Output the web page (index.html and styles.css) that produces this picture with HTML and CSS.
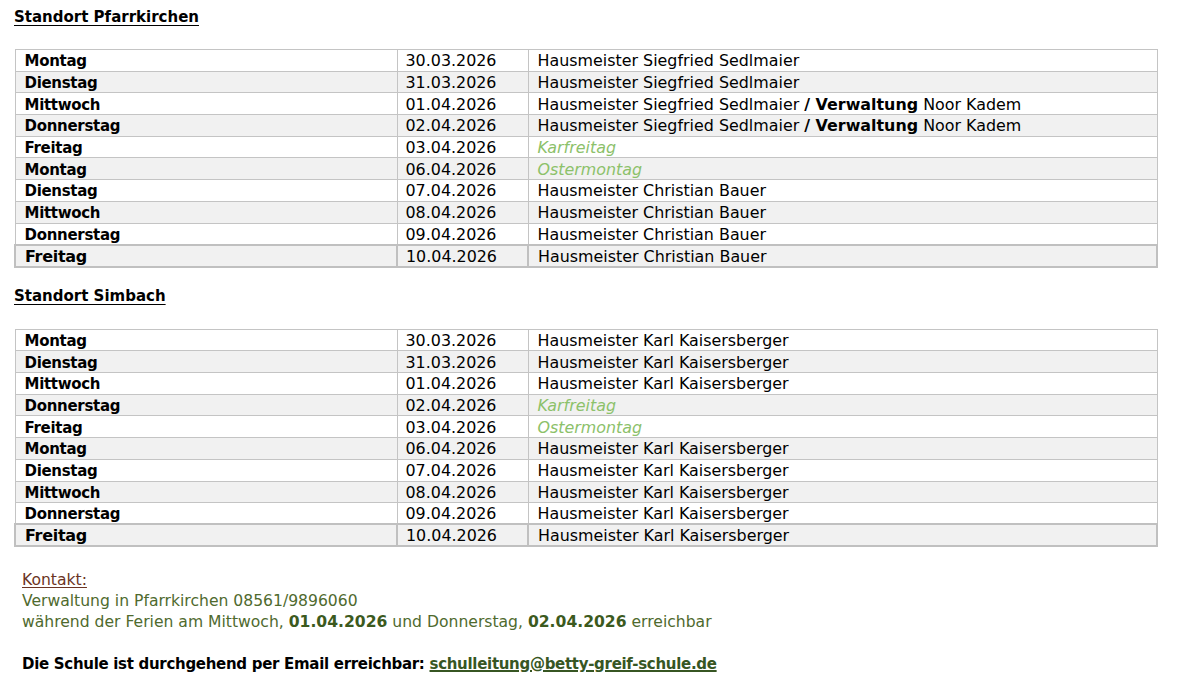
FILE: index.html
```html
<!DOCTYPE html>
<html lang="de"><head><meta charset="utf-8"><link rel="stylesheet" href="styles.css"></head>
<body>
<div class="page">
<h2 class="site">Standort Pfarrkirchen</h2>
<table class="plan">
<tr><td class="day">Montag</td><td class="date">30.03.2026</td><td>Hausmeister Siegfried Sedlmaier</td></tr>
<tr class="alt"><td class="day">Dienstag</td><td class="date">31.03.2026</td><td>Hausmeister Siegfried Sedlmaier</td></tr>
<tr><td class="day">Mittwoch</td><td class="date">01.04.2026</td><td>Hausmeister Siegfried Sedlmaier <b>/ Verwaltung</b> Noor Kadem</td></tr>
<tr class="alt"><td class="day">Donnerstag</td><td class="date">02.04.2026</td><td>Hausmeister Siegfried Sedlmaier <b>/ Verwaltung</b> Noor Kadem</td></tr>
<tr><td class="day">Freitag</td><td class="date">03.04.2026</td><td class="holiday">Karfreitag</td></tr>
<tr class="alt"><td class="day">Montag</td><td class="date">06.04.2026</td><td class="holiday">Ostermontag</td></tr>
<tr><td class="day">Dienstag</td><td class="date">07.04.2026</td><td>Hausmeister Christian Bauer</td></tr>
<tr class="alt"><td class="day">Mittwoch</td><td class="date">08.04.2026</td><td>Hausmeister Christian Bauer</td></tr>
<tr><td class="day">Donnerstag</td><td class="date">09.04.2026</td><td>Hausmeister Christian Bauer</td></tr>
<tr class="alt last"><td class="day">Freitag</td><td class="date">10.04.2026</td><td>Hausmeister Christian Bauer</td></tr>
</table>

<h2 class="site">Standort Simbach</h2>
<table class="plan">
<tr><td class="day">Montag</td><td class="date">30.03.2026</td><td>Hausmeister Karl Kaisersberger</td></tr>
<tr class="alt"><td class="day">Dienstag</td><td class="date">31.03.2026</td><td>Hausmeister Karl Kaisersberger</td></tr>
<tr><td class="day">Mittwoch</td><td class="date">01.04.2026</td><td>Hausmeister Karl Kaisersberger</td></tr>
<tr class="alt"><td class="day">Donnerstag</td><td class="date">02.04.2026</td><td class="holiday">Karfreitag</td></tr>
<tr><td class="day">Freitag</td><td class="date">03.04.2026</td><td class="holiday">Ostermontag</td></tr>
<tr class="alt"><td class="day">Montag</td><td class="date">06.04.2026</td><td>Hausmeister Karl Kaisersberger</td></tr>
<tr><td class="day">Dienstag</td><td class="date">07.04.2026</td><td>Hausmeister Karl Kaisersberger</td></tr>
<tr class="alt"><td class="day">Mittwoch</td><td class="date">08.04.2026</td><td>Hausmeister Karl Kaisersberger</td></tr>
<tr><td class="day">Donnerstag</td><td class="date">09.04.2026</td><td>Hausmeister Karl Kaisersberger</td></tr>
<tr class="alt last"><td class="day">Freitag</td><td class="date">10.04.2026</td><td>Hausmeister Karl Kaisersberger</td></tr>
</table>

<div class="contact">
<p class="label">Kontakt:</p>
<p>Verwaltung in Pfarrkirchen 08561/9896060</p>
<p>während der Ferien am Mittwoch, <b>01.04.2026</b> und Donnerstag, <b>02.04.2026</b> erreichbar</p>
<p class="mail">Die Schule ist durchgehend per Email erreichbar: <a href="#">schulleitung@betty-greif-schule.de</a></p>
</div>
</div>
</body></html>
```
FILE: styles.css
```css
html,body{margin:0;background:#fff}
body{font-family:"DejaVu Sans",sans-serif;color:#000;font-size:16px}
.page{padding:6px 21px 0 14px}
.site{margin:0;font-size:15px;font-weight:bold;text-decoration:underline;text-underline-offset:3px;line-height:22px;height:22px}
.page .site:first-child{margin-bottom:21px}
.plan{width:1144px;border-collapse:collapse;margin-bottom:17px;font-size:15.9px}
.plan + .site{margin-bottom:22px}
.plan td{border:1px solid #c4c4c4;height:21.7px;padding:2px 0 0 9px;line-height:18px;white-space:nowrap;box-sizing:border-box}
.plan td.day{width:382px;font-weight:bold;padding-left:9px;font-size:15px;letter-spacing:-0.3px}
.plan td.date{width:131px;padding-left:8px}
.plan tr.alt td{background:#f1f1f1}
.plan tr.last td{border-width:2px;border-color:#c0c0c0}
.plan tr.last td.day{font-size:16px}
.holiday{color:#8cc16a;font-style:italic}
.contact{padding:6px 0 0 8px;color:#4f6a2e;line-height:21px;font-size:15.6px}
.contact p{margin:0}
.contact b{color:#3c5a1e}
.contact .label{color:#6b3424;text-decoration:underline;text-underline-offset:2px}
.contact .mail{margin-top:21px;color:#000;font-weight:bold;font-size:15px;letter-spacing:-0.3px}
.contact .mail a{color:#375623;text-decoration:underline;text-decoration-thickness:2px}
```
